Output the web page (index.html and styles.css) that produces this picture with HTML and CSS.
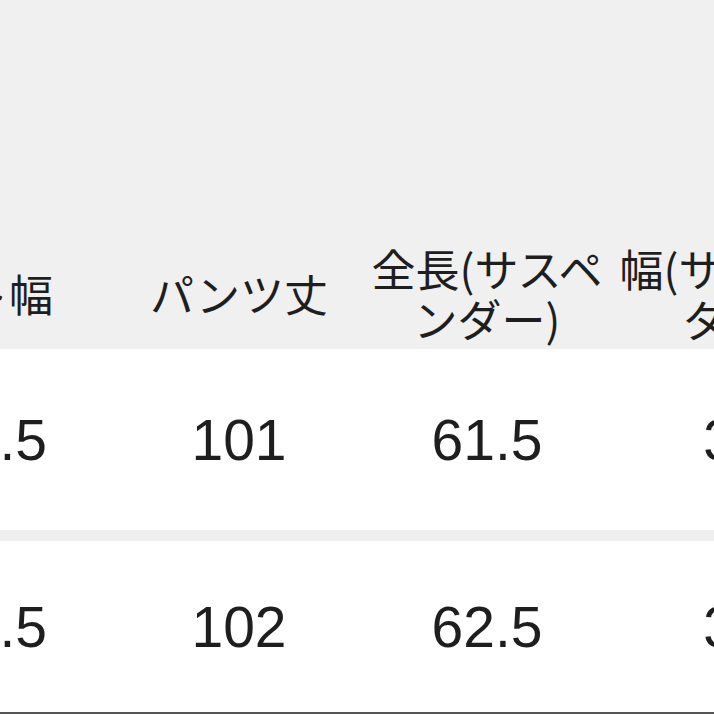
FILE: index.html
```html
<!DOCTYPE html>
<html lang="ja">
<head>
<meta charset="utf-8">
<link rel="stylesheet" href="styles.css">
</head>
<body>
<div class="sheet">
  <div class="table">
    <div class="row head">
      <div class="cell first">ウエスト幅</div>
      <div class="cell">パンツ丈</div>
      <div class="cell">全長(サスペンダー)</div>
      <div class="cell">幅(サスペンダー)</div>
    </div>
    <div class="row body r1">
      <div class="cell first">40.5</div>
      <div class="cell">101</div>
      <div class="cell">61.5</div>
      <div class="cell">35</div>
    </div>
    <div class="sep"></div>
    <div class="row body r2">
      <div class="cell first">41.5</div>
      <div class="cell">102</div>
      <div class="cell">62.5</div>
      <div class="cell">36</div>
    </div>
  </div>
  <div class="bottom-line"></div>
</div>
</body>
</html>
```
FILE: styles.css
```css
html, body {
  margin: 0;
  padding: 0;
  background: #ffffff;
}
.sheet {
  width: 714px;
  height: 714px;
  overflow: hidden;
  display: flex;
  flex-direction: column;
}
.table {
  margin-left: -133px;
  width: 992px;
  display: flex;
  flex-direction: column;
}
.row {
  display: grid;
  grid-template-columns: repeat(4, 248px);
}
.cell {
  text-align: center;
  padding: 0 4px;
  color: #1e1e1e;
}
.cell.first {
  text-align: right;
  white-space: nowrap;
  padding-left: 0;
  padding-right: 62px;
}
.head {
  height: 349px;
  box-sizing: border-box;
  background: #f0f0f0;
  align-items: end;
  padding-bottom: 6px;
  font-family: "Noto Sans CJK JP", sans-serif;
  font-size: 44px;
  line-height: 50px;
}
.head .cell {
  height: 100px;
  display: flex;
  align-items: center;
  justify-content: center;
}
.head .cell.first {
  justify-content: flex-end;
}
.body {
  background: #ffffff;
  align-items: center;
  font-family: "Liberation Sans", "Noto Sans CJK JP", sans-serif;
  font-size: 57px;
  line-height: 60px;
}
.body .cell.first {
  padding-right: 68px;
}
.r1 { height: 181px; }
.r2 { height: 171px; }
.sep {
  height: 11px;
  background: #efefef;
}
.bottom-line {
  height: 2px;
  background: #555555;
}
```
